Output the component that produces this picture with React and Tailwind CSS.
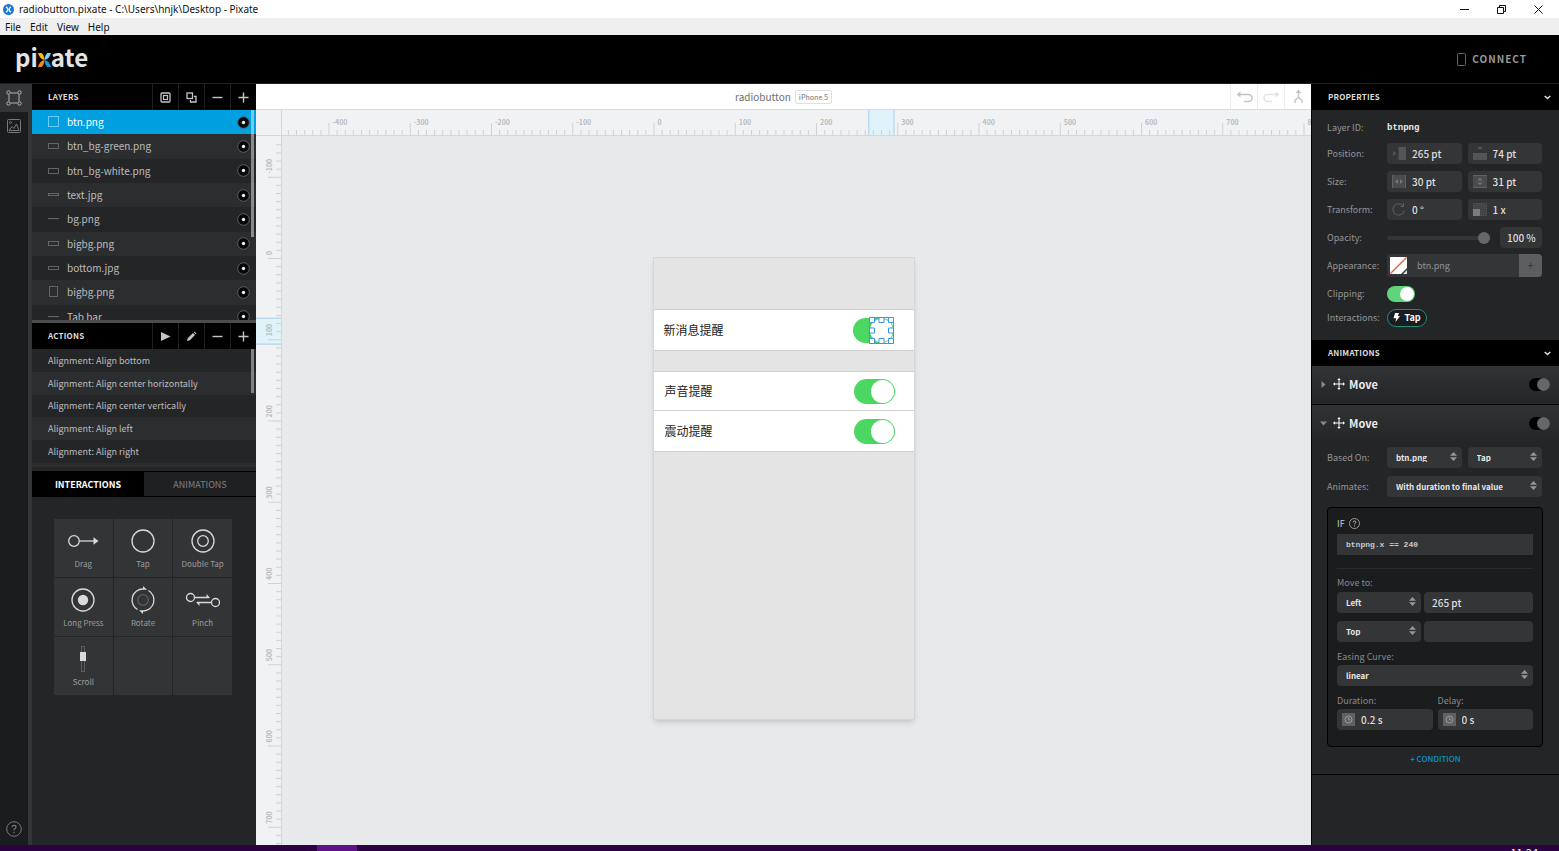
import React, { useState } from 'react';

const layers = [
  { name: 'btn.png', w: 10, h: 11 },
  { name: 'btn_bg-green.png', w: 10, h: 6 },
  { name: 'btn_bg-white.png', w: 10, h: 6 },
  { name: 'text.jpg', w: 10, h: 3 },
  { name: 'bg.png', w: 10, h: 1 },
  { name: 'bigbg.png', w: 10, h: 5 },
  { name: 'bottom.jpg', w: 10, h: 4 },
  { name: 'bigbg.png', w: 8, h: 11 },
  { name: 'Tab bar', w: 10, h: 1 }
];

const actions = [
  'Alignment: Align bottom',
  'Alignment: Align center horizontally',
  'Alignment: Align center vertically',
  'Alignment: Align left',
  'Alignment: Align right'
];

const SCALE = 0.8125;

const Svg = ({ w, h, children, className = '' }) => (
  <svg width={w} height={h} viewBox={`0 0 ${w} ${h}`} fill="none" stroke="currentColor" className={`shrink-0 ${className}`} aria-hidden="true">
    {children}
  </svg>
);

const AppIcon = () => (
  <Svg w={11} h={11}>
    <circle cx="5.5" cy="5.5" r="5.5" fill="#1c78d4" stroke="none" />
    <path d="M3 2.8c1.2.6 1.8 1.5 1.8 2.7S4.2 7.6 3 8.2M8 2.8c-1.2.6-1.8 1.5-1.8 2.7S6.8 7.6 8 8.2" stroke="#fff" strokeWidth="1.4" />
  </Svg>
);

const LogoX = () => (
  <Svg w={13} h={14}>
    <g stroke="none">
      <path d="M0 0h3.6C5.4 1.6 6.4 4 6.4 7 3.400 6.300.8 3.800 0 0z" fill="#fdb913" />
      <path d="M0 14h3.6c1.8-1.600 2.800-4 2.800-7C3.400 7.700.8 10.200 0 14z" fill="#f7861c" />
      <path d="M13 0H9.400C7.600 1.600 6.600 4 6.600 7c3-.7 5.600-3.200 6.400-7z" fill="#7cd0f5" />
      <path d="M13 14H9.400C7.600 12.400 6.600 10 6.600 7c3 .7 5.600 3.200 6.400 7z" fill="#0a9fe0" />
    </g>
  </Svg>
);

const MinusIcon = () => <Svg w={11} h={11}><path d="M.5 5.5h10" strokeWidth="1.4" /></Svg>;
const PlusIcon = () => <Svg w={11} h={11}><path d="M.5 5.5h10M5.5.5v10" strokeWidth="1.4" /></Svg>;
const GroupIcon = () => (
  <Svg w={11} h={11}>
    <rect x="1" y="1" width="9" height="9" rx="1" strokeWidth="1.3" />
    <rect x="3.5" y="3.5" width="4" height="4" strokeWidth="1.2" />
  </Svg>
);
const CopyIcon = () => (
  <Svg w={11} h={11}>
    <rect x="1" y="1" width="5.5" height="5.5" strokeWidth="1.3" />
    <path d="M8 4.500h2V10H4.500V8" strokeWidth="1.3" />
  </Svg>
);
const PlayIcon = () => <Svg w={11} h={11}><path d="M1 1l9.500 4.500L1 10z" fill="currentColor" stroke="none" /></Svg>;
const PencilIcon = () => (
  <Svg w={11} h={11}>
    <path d="M1 10l.7-2.800L7 2l2 2-5.200 5.300zM7.700 1.300l.8-.8 2 2-.8.800z" fill="currentColor" stroke="none" />
  </Svg>
);
const ChevronIcon = () => <Svg w={7} h={5}><path d="M.7 1l2.800 2.500L6.300 1" strokeWidth="1.6" /></Svg>;
const BoundsIcon = () => (
  <Svg w={16} h={16}>
    <path d="M3 4.500v7M13 4.500v7M4.500 3h7M4.500 13h7" />
    <circle cx="2.5" cy="2.5" r="1.7" />
    <circle cx="13.5" cy="2.5" r="1.7" />
    <circle cx="2.5" cy="13.5" r="1.7" />
    <circle cx="13.5" cy="13.5" r="1.7" />
  </Svg>
);
const ImageIcon = () => (
  <Svg w={16} h={16}>
    <rect x="1.5" y="1.5" width="13" height="13" rx="1" />
    <circle cx="4.5" cy="4.5" r="1" />
    <path d="M3 12.500l3-4 2 2 2.500-4.500 2.500 6.500z" />
  </Svg>
);
const HelpIcon = ({ size }) => (
  <svg width={size} height={size} viewBox="0 0 16 16" fill="none" stroke="currentColor" aria-hidden="true">
    <circle cx="8" cy="8" r="7.3" />
    <path d="M6 6.300C6 5 6.800 4.300 8 4.300s2 .7 2 1.800C10 7.500 8 7.600 8 9.300M8 10.800v1.400" strokeWidth="1.2" />
  </svg>
);
const MoveIcon = () => (
  <Svg w={12} h={12} className="text-white">
    <path d="M6 1v10M1 6h10" />
    <path d="M6 0L4.300 2h3.400zM6 12l-1.700-2h3.400zM0 6l2-1.700v3.400zM12 6l-2-1.700v3.400z" fill="currentColor" stroke="none" />
  </Svg>
);
const EyeIcon = () => (
  <Svg w={13} h={13}>
    <circle cx="6.5" cy="6.5" r="5.8" fill="#060708" stroke="#606163" />
    <circle cx="6.5" cy="6.5" r="1.7" fill="#eee" stroke="none" />
  </Svg>
);
const ClockIcon = () => (
  <Svg w={13} h={13}>
    <path d="M0 0h13v13H0z" fill="#606163" stroke="none" />
    <circle cx="6.5" cy="6.5" r="3.5" stroke="#9a9b9c" />
    <path d="M6.500 4.500v2.300h2" stroke="#9a9b9c" />
  </Svg>
);

const fieldIcons = {
  left: (
    <Svg w={14} h={13}>
      <g fill="#545557" stroke="none"><path d="M1 4l3.500 2.500L1 9z" /><path d="M6.500 0H14v13H6.500z" /></g>
    </Svg>
  ),
  top: (
    <Svg w={14} h={13}>
      <g fill="#545557" stroke="none"><path d="M4 0h6L7 3z" /><path d="M0 6h14v7H0z" /></g>
    </Svg>
  ),
  width: (
    <Svg w={14} h={13}>
      <path d="M0 0h14v13H0z" fill="#4b4c4e" stroke="none" />
      <path d="M3 6.500L6 4v5zM11 6.500L8 4v5z" fill="#747577" stroke="none" />
      <path d="M.5 0v13M13.500 0v13" stroke="#626365" />
    </Svg>
  ),
  height: (
    <Svg w={14} h={13}>
      <path d="M0 0h14v13H0z" fill="#4b4c4e" stroke="none" />
      <path d="M7 2.500L4.500 5.500h5zM7 10.500L4.500 7.500h5z" fill="#747577" stroke="none" />
      <path d="M0 .5h14M0 12.500h14" stroke="#626365" />
    </Svg>
  ),
  rotate: (
    <Svg w={14} h={13}>
      <path d="M12.300 7.500a5.700 5.700 0 1 1-1.300-4.800M11.500.5v3h-3" stroke="#606163" />
    </Svg>
  ),
  scale: (
    <Svg w={14} h={13}>
      <path d="M.5.500h13v12H.5z" fill="#444547" stroke="#606163" strokeDasharray="1 1.5" />
      <path d="M0 6h7v7H0z" fill="#7a7b7d" stroke="none" />
    </Svg>
  )
};

const tools = [
  {
    name: 'Drag',
    icon: (
      <Svg w={36} h={30}>
        <circle cx="9" cy="15" r="5.3" strokeWidth="1.3" />
        <path d="M14.500 15H30" strokeWidth="1.3" />
        <path d="M28.500 11.300l5 3.700-5 3.700z" fill="currentColor" stroke="none" />
      </Svg>
    )
  },
  { name: 'Tap', icon: <Svg w={36} h={30}><circle cx="18" cy="15" r="11" strokeWidth="1.3" /></Svg> },
  {
    name: 'Double Tap',
    icon: (
      <Svg w={36} h={30}>
        <circle cx="18" cy="15" r="11" strokeWidth="1.3" />
        <circle cx="18" cy="15" r="5.3" strokeWidth="1.3" />
      </Svg>
    )
  },
  {
    name: 'Long Press',
    icon: (
      <Svg w={36} h={30}>
        <circle cx="18" cy="15" r="11" strokeWidth="1.3" />
        <circle cx="18" cy="15" r="5.2" fill="currentColor" stroke="none" />
      </Svg>
    )
  },
  {
    name: 'Rotate',
    icon: (
      <Svg w={36} h={30}>
        <path d="M23.500 5.500A11 11 0 0 1 18 26M12.500 24.500A11 11 0 0 1 18 4" strokeWidth="1.3" />
        <path d="M18 1l4 3.700h-4zM18 29l-4-3.700h4z" fill="currentColor" stroke="none" />
        <circle cx="18" cy="15" r="5.3" stroke="#5c5d5f" strokeWidth="1.3" />
      </Svg>
    )
  },
  {
    name: 'Pinch',
    icon: (
      <Svg w={36} h={30}>
        <circle cx="5.5" cy="12.5" r="4" strokeWidth="1.3" />
        <circle cx="30.5" cy="17.5" r="4" strokeWidth="1.3" />
        <path d="M9.500 12.500H24M12 17.500h14.500" strokeWidth="1.3" />
        <path d="M21.500 9l3.500 4h-3.500zM14.500 21L11 17h3.500z" fill="currentColor" stroke="none" />
      </Svg>
    )
  },
  {
    name: 'Scroll',
    icon: (
      <Svg w={36} h={30}>
        <rect x="16.5" y="2.5" width="3" height="25" stroke="#5c5d5f" />
        <path d="M15 8h6v9h-6z" fill="currentColor" stroke="none" />
      </Svg>
    )
  },
  { name: '', icon: null },
  { name: '', icon: null }
];

const ticks = (from, to) => {
  const list = [];
  for (let i = from; i <= to; i += 10) list.push(i);
  return list;
};

const HorizontalRuler = () => (
  <svg className="h-full min-w-0 flex-1" aria-hidden="true">
    <svg x="50%" overflow="visible">
      <g transform="translate(-143 0)">
        <rect x={265 * SCALE} y="0" width="25" height="25" fill="#e0f2fa" />
        {ticks(-450, 800).map((t) => (
          <path key={t} d={`M${t * SCALE + 0.5} ${t % 100 === 0 ? 13 : 20}V25`} stroke="#cfd1d4" />
        ))}
        <path d={`M${265 * SCALE} 0v25M${296 * SCALE} 0v25`} stroke="#a5cfea" />
        {ticks(-450, 800).filter((t) => t % 100 === 0).map((t) => (
          <text key={t} x={t * SCALE + 4} y="15" className="fill-[#b9bbbe] text-[7px] font-bold">{t}</text>
        ))}
      </g>
    </svg>
  </svg>
);

const VerticalRuler = () => (
  <svg className="h-full w-[25px]" aria-hidden="true">
    <g transform="translate(0 122)">
      <rect x="0" y={74 * SCALE} width="25" height="26" fill="#e0f2fa" />
      {ticks(-140, 720).map((t) => (
        <path key={t} d={`M${t % 100 === 0 ? 12 : 20} ${t * SCALE + 0.5}H25`} stroke="#cfd1d4" />
      ))}
      <path d={`M0 ${74 * SCALE}h25M0 ${106 * SCALE}h25`} stroke="#a5cfea" />
      {ticks(-140, 720).filter((t) => t % 100 === 0).map((t) => (
        <text key={t} transform={`translate(16 ${t * SCALE - 3}) rotate(-90)`} className="fill-[#b9bbbe] text-[7px] font-bold">{t}</text>
      ))}
    </g>
  </svg>
);

const IconButton = ({ label, children }) => (
  <button type="button" aria-label={label} className="flex h-full w-[26px] items-center justify-center border-l border-[#1f2022] text-[#c4c5c6]">
    {children}
  </button>
);

const PanelHeader = ({ title, children }) => (
  <div className="flex h-[26px] shrink-0 items-center justify-between bg-black pl-4 text-[8px] font-bold tracking-wide text-[#dcdcdc]">
    <h2>{title}</h2>
    <div className="flex h-full">{children}</div>
  </div>
);

const PhoneSwitch = ({ text, selected, className }) => (
  <label className={`flex items-center justify-between border-[#cfcfcf] bg-white text-xs text-[#222] ${className}`}>
    {text}
    <span className="relative flex">
      <input
        type="checkbox"
        defaultChecked
        className="flex h-[25px] w-[41px] appearance-none items-center rounded-full bg-[#4cd763] px-px before:size-[23px] before:rounded-full before:bg-white checked:before:ml-auto"
      />
      {selected && (
        <svg width="25" height="27" className="absolute -top-px right-0" fill="#fff" stroke="#3a97e8" aria-hidden="true">
          <path d="M.5.500h24v26H.5z" fill="none" />
          <path d="M.5.500h5v5h-5zM10 .500h5v5h-5zM19.500.500h5v5h-5zM.5 11h5v5h-5zM19.500 11h5v5h-5zM.5 21.500h5v5h-5zM10 21.500h5v5h-5zM19.500 21.500h5v5h-5z" />
        </svg>
      )}
    </span>
  </label>
);

const Select = ({ label, value, className = '' }) => (
  <div className={`relative flex ${className}`}>
    <select aria-label={label} defaultValue={value} className="h-[21px] w-full appearance-none rounded-sm bg-[#343537] pl-[9px] text-[8px] font-bold text-[#e6e6e6]">
      <option>{value}</option>
    </select>
    <svg width="7" height="9" className="pointer-events-none absolute top-[5px] right-[5px] fill-[#96979a]" aria-hidden="true">
      <path d="M3.500 0L7 3.700H0zM3.500 9L0 5.300h7z" />
    </svg>
  </div>
);

const Field = ({ label, icon, value, className = 'pl-[5px]' }) => (
  <label className={`flex h-[21px] items-center gap-[6px] rounded-sm bg-[#343537] ${className}`}>
    {icon}
    <input type="text" aria-label={label} defaultValue={value} className="w-full min-w-0 bg-transparent text-[10px] font-medium text-[#dedede]" />
  </label>
);

const Row = ({ label, children, className = 'h-[21px]' }) => (
  <div className={`flex items-center ${className}`}>
    <span className="w-[60px] shrink-0 text-[#949597]">{label}</span>
    <div className="flex min-w-0 flex-1 items-center gap-[6px]">{children}</div>
  </div>
);

const MoveHeader = ({ open }) => (
  <div className="flex h-[38px] items-center bg-linear-to-b from-[#323335] to-[#242527] pr-[9px] pb-[2px] pl-2">
    <button type="button" aria-label="Toggle section" className="flex w-[13px] text-[#8b8c8e]">
      <Svg w={7} h={7}><path d={open ? 'M0 1.500h7L3.500 5.500z' : 'M1.500 0v7L5.500 3.500z'} fill="currentColor" stroke="none" /></Svg>
    </button>
    <MoveIcon />
    <h3 className="ml-1 flex-1 text-[11px] font-bold text-[#ededed]">Move</h3>
    <input
      type="checkbox"
      aria-label="Enable Move"
      defaultChecked
      className="flex h-[13px] w-[21px] appearance-none items-center rounded-full bg-black before:size-[13px] before:rounded-full before:bg-[#66676a] checked:before:ml-auto"
    />
  </div>
);

const WindowBar = () => (
  <header className="shrink-0 bg-white font-['Noto_Sans','Open_Sans',sans-serif] text-[#111]">
    <div className="flex h-[18px] items-center justify-between pr-4 pl-[3px]">
      <div className="flex items-center gap-[5px] text-[10px]">
        <AppIcon />
        <span>radiobutton.pixate - C:\Users\hnjk\Desktop - Pixate</span>
      </div>
      <div className="flex items-center gap-7">
        <button type="button" aria-label="Minimize"><Svg w={9} h={9}><path d="M0 4.500h9" /></Svg></button>
        <button type="button" aria-label="Restore"><Svg w={9} h={9}><path d="M.5 2.500h6v6h-6zM2.500 2V.5h6v6H7" /></Svg></button>
        <button type="button" aria-label="Close"><Svg w={9} h={9}><path d="M.5.500l8 8M8.500.500l-8 8" /></Svg></button>
      </div>
    </div>
    <nav className="flex h-[17px] items-center gap-[9px] bg-[#efefef] pl-[5px] text-[10px]">
      <button type="button">File</button>
      <button type="button">Edit</button>
      <button type="button">View</button>
      <button type="button">Help</button>
    </nav>
  </header>
);

const LeftPanel = ({ selected, setSelected }) => (
  <aside className="flex w-[224px] shrink-0 flex-col bg-[#242527]">
    <PanelHeader title="LAYERS">
      <IconButton label="Group"><GroupIcon /></IconButton>
      <IconButton label="Duplicate"><CopyIcon /></IconButton>
      <IconButton label="Remove layer"><MinusIcon /></IconButton>
      <IconButton label="Add layer"><PlusIcon /></IconButton>
    </PanelHeader>
    <div className="relative h-[210px] shrink-0 overflow-hidden">
      <ul className="grid h-[219px] grid-rows-9">
        {layers.map((layer, i) => (
          <li
            key={i}
            onClick={() => setSelected(i)}
            className={`flex items-center pr-[6px] pl-4 text-[10px] ${i === selected ? 'bg-[#00a0e0] text-white' : 'text-[#bcbdbe] odd:bg-[#242527] even:bg-[#2c2d2f]'}`}
          >
            <Svg w={12} h={12} className={i === selected ? 'text-[#6cccf2]' : 'text-[#646567]'}>
              <rect x={layer.w < 10 ? 1.5 : 0.5} y={Math.floor((12 - layer.h) / 2) + 0.5} width={layer.w} height={layer.h > 1 ? layer.h - 1 : 0.1} />
            </Svg>
            <span className="ml-[7px] flex-1">{layer.name}</span>
            <button type="button" aria-label={`Toggle ${layer.name}`}><EyeIcon /></button>
          </li>
        ))}
      </ul>
      <div className="absolute top-0 right-[2px] h-[127px] w-[3px] bg-white/45" />
    </div>
    <div className="h-[3px] shrink-0 bg-[#4c4d4f]" />
    <PanelHeader title="ACTIONS">
      <IconButton label="Run action"><PlayIcon /></IconButton>
      <IconButton label="Edit action"><PencilIcon /></IconButton>
      <IconButton label="Remove action"><MinusIcon /></IconButton>
      <IconButton label="Add action"><PlusIcon /></IconButton>
    </PanelHeader>
    <div className="relative h-[122px] shrink-0 bg-[#242527]">
      <ul className="grid h-[114px] grid-rows-5">
        {actions.map((action) => (
          <li key={action} className="flex items-center pl-4 text-[9px] text-[#bcbdbe] even:bg-[#2c2d2f]">{action}</li>
        ))}
      </ul>
      <div className="h-1 bg-[#2c2d2f]" />
      <div className="absolute top-0 right-[2px] h-[44px] w-[3px] bg-[#808183]" />
    </div>
    <div className="flex h-[26px] shrink-0 border-y border-black text-[9px]">
      <button type="button" className="flex-1 bg-black font-bold text-white">INTERACTIONS</button>
      <button type="button" className="flex-1 bg-[#1f2022] text-[#808183]">ANIMATIONS</button>
    </div>
    <div className="pt-[22px] pl-[22px]">
      <div className="grid w-[178px] grid-cols-3 gap-px">
        {tools.map((tool, i) => (
          <button key={i} type="button" className="flex h-[58px] flex-col items-center bg-[#333436] pt-[7px] text-[8px] text-[#9c9d9f]">
            <span className="text-[#d8d9da]">{tool.icon}</span>
            <span className="mt-1">{tool.name}</span>
          </button>
        ))}
      </div>
    </div>
  </aside>
);

const Workspace = () => (
  <main className="flex min-w-0 flex-1 flex-col bg-[#e8e9eb]">
    <div className="grid h-[26px] shrink-0 grid-cols-[1fr_auto_1fr] items-center border-b border-[#d9dbdd] bg-white">
      <div />
      <div className="flex items-center gap-1 text-[10px] text-[#6f7072]">
        <h1>radiobutton</h1>
        <span className="rounded-xs border border-[#dfe0e1] px-[3px] text-[7px] leading-3 font-medium text-[#8a8b8d]">iPhone 5</span>
      </div>
      <div className="flex h-full justify-end">
        <button type="button" aria-label="Undo" className="flex w-[27px] items-center justify-center border-l border-[#ececed] text-[#c3c5c8]">
          <Svg w={17} h={12}><path d="M2 3.500h10.500a3.500 3.500 0 0 1 0 7H8" strokeWidth="1.5" /><path d="M4.500.5v6L.5 3.500z" fill="currentColor" stroke="none" /></Svg>
        </button>
        <button type="button" aria-label="Redo" className="flex w-[27px] items-center justify-center border-l border-[#ececed] text-[#e3e4e6]">
          <Svg w={17} h={12}><path d="M15 3.500H4.500a3.500 3.500 0 0 0 0 7H9" strokeWidth="1.5" /><path d="M12.500.5v6l4-3z" fill="currentColor" stroke="none" /></Svg>
        </button>
        <button type="button" aria-label="Merge" className="flex w-[27px] items-center justify-center border-l border-[#ececed] text-[#c3c5c8]">
          <Svg w={11} h={15}><path d="M5.500 2v5.500M2 14v-2.500l3.500-3.500L9 11.500V14" strokeWidth="1.5" /><path d="M5.500.500L2.500 4h6z" fill="currentColor" stroke="none" /></Svg>
        </button>
      </div>
    </div>
    <div className="flex h-[26px] shrink-0 border-b border-[#d4d6d8] bg-[#f1f2f4]">
      <div className="w-[26px] border-r border-[#d4d6d8]" />
      <HorizontalRuler />
    </div>
    <div className="flex min-h-0 flex-1">
      <div className="w-[26px] border-r border-[#d4d6d8] bg-[#f1f2f4]">
        <VerticalRuler />
      </div>
      <div className="flex min-w-0 flex-1 justify-center pt-[121px] pr-[26px]">
        <div className="h-[463px] w-[262px] border border-[#d5d6d7] bg-[#e4e4e4] pt-[51px] shadow-md">
          <PhoneSwitch text="新消息提醒" selected className="h-[42px] border-y pr-5 pl-[10px]" />
          <PhoneSwitch text="声音提醒" className="mt-5 h-[39px] border-t pr-[19px] pl-[11px]" />
          <PhoneSwitch text="震动提醒" className="h-[42px] border-y pr-[19px] pl-[11px]" />
        </div>
      </div>
    </div>
  </main>
);

const PropertiesPanel = () => (
  <aside className="flex w-[248px] shrink-0 flex-col border-l border-black bg-[#242527] text-[9px]">
    <PanelHeader title="PROPERTIES">
      <button type="button" aria-label="Collapse properties" className="pr-2"><ChevronIcon /></button>
    </PanelHeader>
    <section className="flex h-[230px] shrink-0 flex-col gap-[7px] pt-[7px] pr-[17px] pl-[15px]">
      <Row label="Layer ID:" className="-mb-[2px] h-[21px]">
        <input type="text" aria-label="Layer ID" defaultValue="btnpng" className="w-full bg-transparent font-['Liberation_Mono',monospace] text-[9px] font-bold text-[#ececec]" />
      </Row>
      <Row label="Position:">
        <Field label="Left" icon={fieldIcons.left} value="265 pt" className="flex-1 pl-[5px]" />
        <Field label="Top" icon={fieldIcons.top} value="74 pt" className="flex-1 pl-[5px]" />
      </Row>
      <Row label="Size:">
        <Field label="Width" icon={fieldIcons.width} value="30 pt" className="flex-1 pl-[5px]" />
        <Field label="Height" icon={fieldIcons.height} value="31 pt" className="flex-1 pl-[5px]" />
      </Row>
      <Row label="Transform:">
        <Field label="Rotation" icon={fieldIcons.rotate} value="0 °" className="flex-1 pl-[5px]" />
        <Field label="Scale" icon={fieldIcons.scale} value="1 x" className="flex-1 pl-[5px]" />
      </Row>
      <Row label="Opacity:">
        <input
          type="range"
          aria-label="Opacity"
          defaultValue="100"
          className="mr-1 h-1 min-w-0 flex-1 appearance-none rounded-full bg-[#343537] [&::-webkit-slider-thumb]:size-3 [&::-webkit-slider-thumb]:appearance-none [&::-webkit-slider-thumb]:rounded-full [&::-webkit-slider-thumb]:bg-[#66676a]"
        />
        <Field label="Opacity value" value="100 %" className="w-[42px] pl-[7px]" />
      </Row>
      <Row label="Appearance:">
        <div className="flex h-[23px] flex-1 items-center overflow-hidden rounded-sm bg-[#343537] pl-[3px] text-[#929395]">
          <Svg w={17} h={17}>
            <path d="M0 0h17v11l-6 6H0z" fill="#fff" stroke="none" />
            <path d="M.5 16.500l16-16" stroke="#e8553f" strokeWidth="1.3" />
            <path d="M17 13v4h-4z" fill="#ddd" stroke="none" />
          </Svg>
          <span className="ml-[10px] flex-1">btn.png</span>
          <button type="button" aria-label="Add appearance" className="h-full w-[23px] bg-[#5d5e60] text-[11px] text-[#343537]">+</button>
        </div>
      </Row>
      <Row label="Clipping:">
        <input
          type="checkbox"
          aria-label="Clipping"
          defaultChecked
          className="flex h-4 w-7 appearance-none items-center rounded-full bg-[#5fd47a] px-px before:size-[14px] before:rounded-full before:bg-white checked:before:ml-auto"
        />
      </Row>
      <Row label="Interactions:" className="-mt-1 h-[21px]">
        <button type="button" className="flex h-[18px] w-10 items-center justify-center gap-1 rounded-full border border-[#1d8f7c] bg-[#1b1c1e] font-bold text-white">
          <Svg w={7} h={9}><path d="M2 0h4L4.800 3H7L2.500 9l.7-3.700H.5z" fill="currentColor" stroke="none" /></Svg>
          Tap
        </button>
      </Row>
    </section>
    <PanelHeader title="ANIMATIONS">
      <button type="button" aria-label="Collapse animations" className="pr-2"><ChevronIcon /></button>
    </PanelHeader>
    <section className="border-b border-black">
      <MoveHeader />
    </section>
    <section className="border-b border-black">
      <MoveHeader open />
      <div className="flex flex-col gap-2 pt-1 pr-[17px] pl-[15px]">
        <Row label="Based On:">
          <Select label="Based on layer" value="btn.png" className="flex-1" />
          <Select label="Based on event" value="Tap" className="flex-1" />
        </Row>
        <Row label="Animates:">
          <Select label="Animates" value="With duration to final value" className="flex-1" />
        </Row>
      </div>
      <div className="mr-4 ml-[15px] mt-[10px] h-[240px] rounded-sm border border-black bg-[#1b1c1e] px-[9px] pt-[7px] text-[#88898b]">
        <div className="flex h-4 items-center gap-1 text-[#cfcfcf]">
          IF <HelpIcon size={11} />
        </div>
        <input
          type="text"
          aria-label="Condition"
          defaultValue="btnpng.x == 240"
          className="mt-[3px] block h-[21px] w-full bg-[#343537] pl-[9px] font-['Liberation_Mono',monospace] text-[8px] font-bold text-[#c9cacb]"
        />
        <div className="mt-[13px] border-t border-[#2a2b2d]" />
        <div className="mt-2 leading-3">Move to:</div>
        <div className="mt-[3px] flex gap-[3px]">
          <Select label="Horizontal edge" value="Left" className="w-[84px]" />
          <Field label="Horizontal position" value="265 pt" className="flex-1 pl-2" />
        </div>
        <div className="mt-2 flex gap-[3px]">
          <Select label="Vertical edge" value="Top" className="w-[84px]" />
          <Field label="Vertical position" value="" className="flex-1 pl-2" />
        </div>
        <label className="mt-[9px] block leading-3">Easing Curve:</label>
        <Select label="Easing Curve" value="linear" className="mt-[2px]" />
        <div className="mt-[9px] grid grid-cols-2 gap-[5px] leading-3">
          <span>Duration:</span>
          <span>Delay:</span>
        </div>
        <div className="mt-[2px] grid grid-cols-2 gap-[5px]">
          <Field label="Duration" icon={<ClockIcon />} value="0.2 s" />
          <Field label="Delay" icon={<ClockIcon />} value="0 s" />
        </div>
      </div>
      <div className="flex h-[27px] items-center justify-center pb-1">
        <button type="button" className="text-[8px] font-medium text-[#0a93cc]">+ CONDITION</button>
      </div>
    </section>
  </aside>
);

const App = () => {
  const [selected, setSelected] = useState(0);

  return (
    <div className="flex h-screen flex-col overflow-hidden bg-black font-['Noto_Sans_CJK_SC',sans-serif] leading-none">
      <WindowBar />

      <div className="flex h-[49px] shrink-0 items-center justify-between border-b border-[#1f2022] pr-8 pl-[15px]">
        <div className="flex items-baseline pb-1 text-[24px] font-bold text-[#e3e4e5]">
          pi<LogoX />ate
        </div>
        <button type="button" className="flex items-center gap-[6px] text-[10px] font-bold tracking-widest text-[#98999b]">
          <Svg w={9} h={13} className="text-[#66676a]"><rect x=".5" y=".5" width="8" height="12" rx="1" /></Svg>
          CONNECT
        </button>
      </div>

      <div className="flex min-h-0 flex-1">
        <nav className="flex w-8 shrink-0 flex-col border-r-4 border-[#343537] bg-[#1b1c1e] text-[#77787a]">
          <button type="button" aria-label="Layers" className="flex h-7 items-center justify-center bg-[#343537] text-[#b5b6b7]"><BoundsIcon /></button>
          <button type="button" aria-label="Assets" className="flex h-7 items-center justify-center"><ImageIcon /></button>
          <button type="button" aria-label="Help" className="mt-auto mb-2 flex justify-center"><HelpIcon size={16} /></button>
        </nav>
        <LeftPanel selected={selected} setSelected={setSelected} />
        <Workspace />
        <PropertiesPanel />
      </div>

      {/* Taskbar */}
      <footer className="flex h-[6px] shrink-0 justify-between overflow-hidden bg-[#2b0142] pr-[21px] pl-[317px]">
        <div className="w-10 bg-[#5f1288]" />
        <span className="pt-[2px] text-[11px] text-white">11:24</span>
      </footer>
    </div>
  );
};

export default App;
